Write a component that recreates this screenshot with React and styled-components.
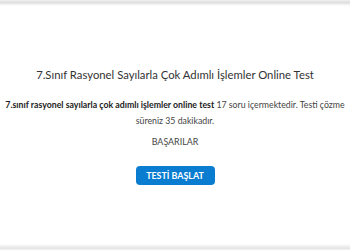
import React from "react";
import styled, { createGlobalStyle } from "styled-components";

const GlobalStyle = createGlobalStyle`
  body {
    margin: 0;
    background: #fff;
    font-family: Lato, "Open Sans", sans-serif;
  }
`;

const Page = styled.div`
  width: 350px;
  height: 250px;
  overflow: hidden;
  display: flex;
  flex-direction: column;
  background: #fff;
`;

const Edge = styled.div`
  height: 6px;
  flex: none;
  background: ${(p) =>
    p.$bottom
      ? "linear-gradient(to bottom, #fff, #e4e4e4 70%, #f3f3f3)"
      : "linear-gradient(to bottom, #f0f0f0, #dedede 40%, #fff)"};
`;

const Card = styled.div`
  flex: 1;
  display: flex;
  flex-direction: column;
  align-items: center;
  padding-top: 61px;
  text-align: center;
  color: #333;
`;

const Title = styled.h1`
  margin: 0;
  font-size: 11.3px;
  font-weight: 400;
  line-height: 16px;
  color: #333;
`;

const Info = styled.p`
  width: 350px;
  margin: 14px 0 0;
  font-size: 8.75px;
  line-height: 16px;
  color: #444;

  strong {
    font-weight: 700;
    color: #222;
  }
`;

const Wish = styled.p`
  margin: 6px 0 0;
  font-size: 8.9px;
  line-height: 14px;
  color: #444;
`;

const StartButton = styled.button`
  margin-top: 17px;
  padding: 0;
  height: 19px;
  width: 79px;
  border: none;
  border-radius: 4px;
  background: #0a7dd1;
  color: #fff;
  font-family: Lato, sans-serif;
  font-weight: 700;
  font-size: 8.9px;
  cursor: pointer;
`;

export default function App() {
  return (
    <>
      <GlobalStyle />
      <Page>
        <Edge />
        <Card>
          <Title>7.Sınıf Rasyonel Sayılarla Çok Adımlı İşlemler Online Test</Title>
          <Info>
            <strong>7.sınıf rasyonel sayılarla çok adımlı işlemler online test</strong>{" "}
            17 soru içermektedir. Testi çözme süreniz 35 dakikadır.
          </Info>
          <Wish>BAŞARILAR</Wish>
          <StartButton>TESTİ BAŞLAT</StartButton>
        </Card>
        <Edge $bottom />
      </Page>
    </>
  );
}
